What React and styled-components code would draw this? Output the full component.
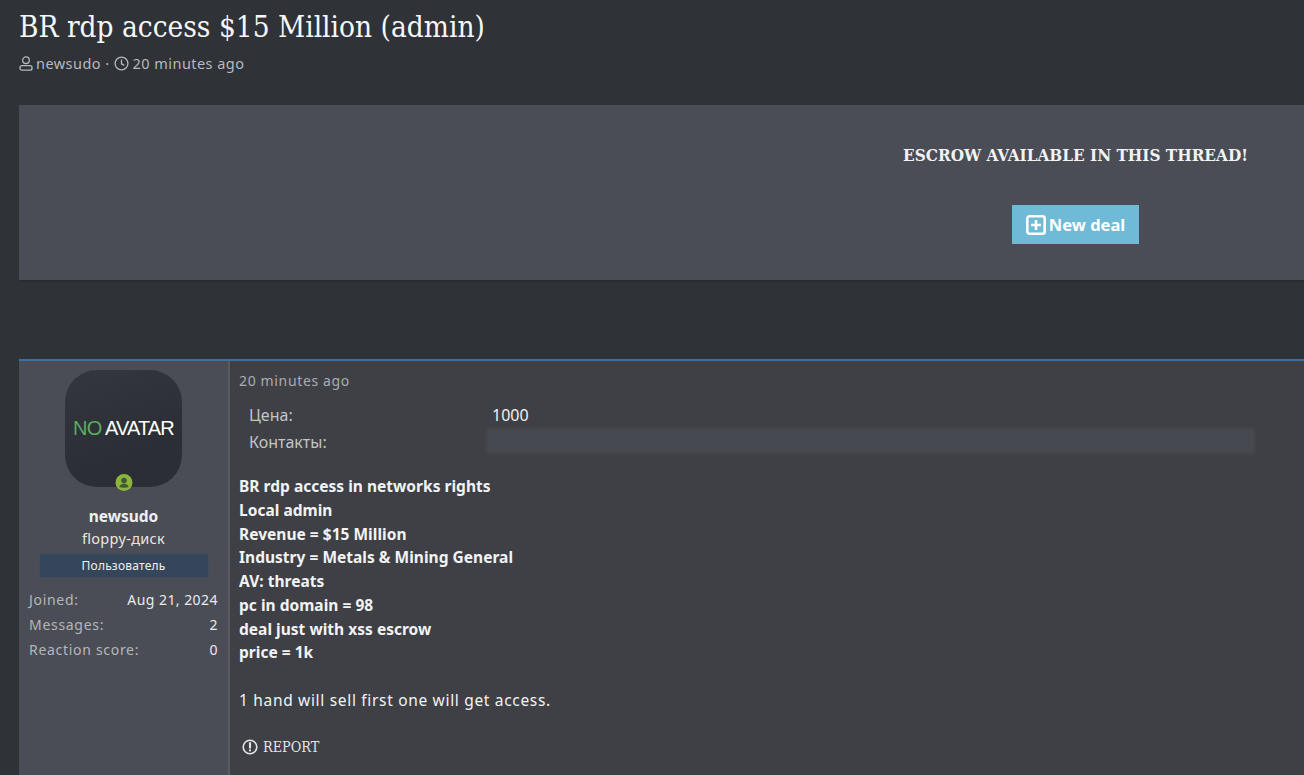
import React from "react";
import styled, { createGlobalStyle } from "styled-components";

const Global = createGlobalStyle`
  html, body { margin: 0; padding: 0; height: 775px; overflow: hidden; background: #2f3237; }
  * { box-sizing: border-box; }
  body { font-family: "Noto Sans", sans-serif; color: #fff; }
`;
const slab = `"DejaVu Serif Condensed", "DejaVu Serif", "Liberation Serif", serif`;
const Page = styled.div`
  height: 775px;
  overflow: hidden;
  padding: 0 0 0 19px;
  background: #2f3237;
`;
const Header = styled.header`
  height: 105px;
  padding-top: 8px;
`;
const Title = styled.h1`
  margin: 0;
  font: 400 29.5px/38px ${slab};
  color: #f6f7f8;
  white-space: nowrap;
`;
const Meta = styled.div`
  display: flex;
  align-items: center;
  gap: 3px;
  margin-top: 7px;
  font-size: 14.5px;
  line-height: 20px;
  letter-spacing: 0.45px;
  color: #b6b9bf;
`;
const EscrowBox = styled.section`
  height: 177px;
  background: #4a4d55;
  border-bottom: 2px solid #292b30;
  display: flex;
  justify-content: flex-end;
`;
const EscrowInner = styled.div`
  width: 347px;
  margin-right: 55px;
  padding-top: 38px;
  display: flex;
  flex-direction: column;
  align-items: center;
`;
const EscrowText = styled.div`
  font: 700 17px/24px ${slab};
  color: #f2f3f4;
  white-space: nowrap;
`;
const DealButton = styled.button`
  margin-top: 38px;
  width: 127px;
  height: 39px;
  border: 0;
  padding: 0;
  background: #6fbad6;
  color: #fff;
  display: flex;
  align-items: center;
  justify-content: center;
  gap: 3px;
  font: 700 16.5px "Noto Sans", sans-serif;
`;
const Post = styled.article`
  margin-top: 77px;
  height: 416px;
  border-top: 2px solid #3f6ea3;
  display: flex;
`;
const Side = styled.aside`
  width: 211px;
  flex: none;
  background: #4a4d55;
  border-right: 2px solid #575b64;
  padding: 9px 10px 0 10px;
  display: flex;
  flex-direction: column;
  align-items: center;
`;
const Avatar = styled.div`
  position: relative;
  width: 117px;
  height: 117px;
  flex: none;
  border-radius: 32px;
  background: linear-gradient(160deg, #33373e, #2b2e34 70%);
  display: flex;
  align-items: center;
  justify-content: center;
  font: 400 20px "Liberation Sans", sans-serif;
  letter-spacing: -0.85px;
  white-space: pre;
`;
const No = styled.span`
  color: #5cab62;
`;
const Badge = styled.span`
  position: absolute;
  left: 50%;
  bottom: -4px;
  transform: translateX(-50%);
  width: 17px;
  height: 17px;
  border-radius: 50%;
  background: #8db53c;
  display: flex;
`;
const Name = styled.div`
  margin-top: 18px;
  font-weight: 700;
  font-size: 15.5px;
  line-height: 22px;
  color: #eef0f2;
`;
const UserTitle = styled.div`
  font-size: 14.5px;
  line-height: 22px;
  letter-spacing: 0.3px;
  color: #e8e8dc;
`;
const Role = styled.div`
  margin-top: 4px;
  width: 170px;
  height: 25px;
  background: #35465a;
  border: 1px solid #3f4d5e;
  font-size: 12px;
  line-height: 23px;
  text-align: center;
  letter-spacing: 0.2px;
  color: #eef0f2;
`;
const Stats = styled.dl`
  width: 100%;
  margin: 10px 0 0;
`;
const Stat = styled.div`
  display: flex;
  justify-content: space-between;
  height: 25px;
  font-size: 14px;
  line-height: 24px;
  letter-spacing: 0.7px;
`;
const StatLabel = styled.dt`
  color: #b4b7b8;
`;
const StatValue = styled.dd`
  margin: 0;
  letter-spacing: 0.45px;
  color: #e8eaed;
`;
const Main = styled.div`
  flex: 1;
  background: #3e4045;
  padding: 10px 9px 0 9px;
`;
const Time = styled.div`
  font-size: 14px;
  line-height: 20px;
  letter-spacing: 0.65px;
  color: #a9acb2;
`;
const Fields = styled.div`
  margin-top: 11px;
  padding-left: 10px;
`;
const Field = styled.div`
  display: flex;
  height: 27px;
  font-size: 16px;
  line-height: 26px;
`;
const FieldLabel = styled.div`
  width: 243px;
  color: #c3c5c8;
`;
const FieldValue = styled.div`
  color: #f0f1f2;
`;
const Blurred = styled.div`
  width: 769px;
  height: 26px;
  margin-left: -6px;
  margin-top: -1px;
  background: #46494f;
  border-radius: 3px;
  filter: blur(1.5px);
`;
const Body = styled.div`
  margin-top: 19px;
  font-size: 15.5px;
  line-height: 23.75px;
  letter-spacing: 0.68px;
  color: #f2f3f4;
`;
const BoldLine = styled.div`
  font-weight: 700;
  letter-spacing: 0.02px;
`;
const Gap = styled.div`
  height: 24px;
`;
const Report = styled.div`
  margin-top: 23px;
  padding-left: 3px;
  display: flex;
  align-items: center;
  gap: 5px;
  font: 400 14.3px/22px ${slab};
  color: #e4e5e7;
`;
const ClockSvg = styled.svg`
  margin: 0 1px 0 1px;
`;

const UserIcon = () => (
  <svg width="14" height="15" viewBox="0 0 14 15" fill="none" stroke="#b6b9bf" strokeWidth="1.3">
    <circle cx="7" cy="4.2" r="3.3" />
    <rect x="1" y="9.6" width="12" height="4.6" rx="2" />
  </svg>
);
const ClockIcon = () => (
  <ClockSvg width="15" height="15" viewBox="0 0 15 15" fill="none" stroke="#b6b9bf" strokeWidth="1.3">
    <circle cx="7.5" cy="7.5" r="6.4" />
    <path d="M7.5 3.6v4.2l2.8 1.6" />
  </ClockSvg>
);
const PlusIcon = () => (
  <svg width="20" height="20" viewBox="0 0 20 20" fill="none" stroke="#fff">
    <rect x="1.3" y="1.3" width="17.4" height="17.4" rx="2.2" strokeWidth="2.6" />
    <path d="M10 5v10M5 10h10" strokeWidth="2.6" />
  </svg>
);
const BadgeIcon = () => (
  <svg width="17" height="17" viewBox="0 0 17 17" fill="#3f5a2c">
    <circle cx="8.5" cy="6.6" r="2.8" />
    <path d="M3.8 12.4c.8-1.7 2.6-2.3 4.7-2.3s3.9.6 4.7 2.3c-1.2 1-2.9 1.4-4.7 1.4s-3.5-.4-4.7-1.4z" />
  </svg>
);
const AlertIcon = () => (
  <svg width="16" height="16" viewBox="0 0 16 16" fill="none" stroke="#e4e5e7">
    <circle cx="8" cy="8" r="6.8" strokeWidth="1.6" />
    <path d="M8 4v4.8" strokeWidth="2.1" strokeLinecap="round" />
    <circle cx="8" cy="11.4" r="1.1" fill="#e4e5e7" stroke="none" />
  </svg>
);

const stats = [
  ["Joined:", "Aug 21, 2024"],
  ["Messages:", "2"],
  ["Reaction score:", "0"],
];
const lines = [
  "BR rdp access in networks rights",
  "Local admin",
  "Revenue = $15 Million",
  "Industry = Metals & Mining General",
  "AV: threats",
  "pc in domain = 98",
  "deal just with xss escrow",
  "price = 1k",
];

export default function App() {
  return (
    <Page>
      <Global />
      <Header>
        <Title>BR rdp access $15 Million (admin)</Title>
        <Meta>
          <UserIcon /> newsudo · <ClockIcon /> 20 minutes ago
        </Meta>
      </Header>
      <EscrowBox>
        <EscrowInner>
          <EscrowText>ESCROW AVAILABLE IN THIS THREAD!</EscrowText>
          <DealButton>
            <PlusIcon /> New deal
          </DealButton>
        </EscrowInner>
      </EscrowBox>
      <Post>
        <Side>
          <Avatar>
            <No>NO</No> AVATAR
            <Badge>
              <BadgeIcon />
            </Badge>
          </Avatar>
          <Name>newsudo</Name>
          <UserTitle>floppy-диск</UserTitle>
          <Role>Пользователь</Role>
          <Stats>
            {stats.map(([k, v]) => (
              <Stat key={k}>
                <StatLabel>{k}</StatLabel>
                <StatValue>{v}</StatValue>
              </Stat>
            ))}
          </Stats>
        </Side>
        <Main>
          <Time>20 minutes ago</Time>
          <Fields>
            <Field>
              <FieldLabel>Цена:</FieldLabel>
              <FieldValue>1000</FieldValue>
            </Field>
            <Field>
              <FieldLabel>Контакты:</FieldLabel>
              <Blurred />
            </Field>
          </Fields>
          <Body>
            {lines.map((l) => (
              <BoldLine key={l}>{l}</BoldLine>
            ))}
            <Gap />
            <div>1 hand will sell first one will get access.</div>
          </Body>
          <Report>
            <AlertIcon /> REPORT
          </Report>
        </Main>
      </Post>
    </Page>
  );
}
